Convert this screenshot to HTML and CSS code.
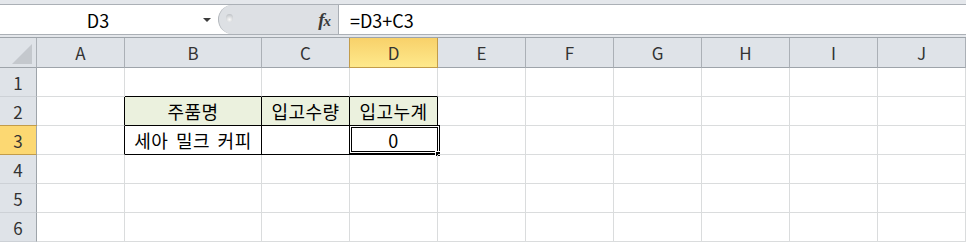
FILE: index.html
```html
<!doctype html>
<html lang="ko">
    <head>
        <meta charset="utf-8">
        <link rel="stylesheet" href="styles.css">
    </head>
    <body>
        <!-- Barra de fórmulas: cuadro de nombre, zona fx y fórmula -->
        <div class="Cinta">
            <div class="BarraFormula">
                <div class="CuadroNombre"><span>D3</span><i class="Flecha"></i></div>
                <div class="ZonaFx"><span class="Pomo"></span><span class="Fx">f<small>x</small></span></div>
                <div class="Formula">=D3+C3</div>
            </div>
        </div>

        <!-- Hoja: 11 columnas (cabecera de filas + A..J) y 7 filas (cabecera + 1..6) -->
        <div class="Hoja">
            <div class="Esquina"><i></i></div>
            <div class="Cab">A</div>
            <div class="Cab">B</div>
            <div class="Cab">C</div>
            <div class="Cab Activa">D</div>
            <div class="Cab">E</div>
            <div class="Cab">F</div>
            <div class="Cab">G</div>
            <div class="Cab">H</div>
            <div class="Cab">I</div>
            <div class="Cab">J</div>

            <div class="Num">1</div>
            <div class="Celda"></div>
            <div class="Celda BordeAbajo"></div>
            <div class="Celda BordeAbajo"></div>
            <div class="Celda BordeAbajo"></div>
            <div class="Celda"></div>
            <div class="Celda"></div>
            <div class="Celda"></div>
            <div class="Celda"></div>
            <div class="Celda"></div>
            <div class="Celda"></div>

            <div class="Num">2</div>
            <div class="Celda BordeDer"></div>
            <div class="Celda Tabla Titulo">주품명</div>
            <div class="Celda Tabla Titulo">입고수량</div>
            <div class="Celda Tabla Titulo">입고누계</div>
            <div class="Celda"></div>
            <div class="Celda"></div>
            <div class="Celda"></div>
            <div class="Celda"></div>
            <div class="Celda"></div>
            <div class="Celda"></div>

            <div class="Num Activa">3</div>
            <div class="Celda BordeDer"></div>
            <div class="Celda Tabla">세아 밀크 커피</div>
            <div class="Celda Tabla"></div>
            <div class="Celda Tabla Seleccion">0<i class="Marco"></i><i class="Tirador"></i></div>
            <div class="Celda"></div>
            <div class="Celda"></div>
            <div class="Celda"></div>
            <div class="Celda"></div>
            <div class="Celda"></div>
            <div class="Celda"></div>

            <div class="Num">4</div>
            <div class="Celda"></div>
            <div class="Celda"></div>
            <div class="Celda"></div>
            <div class="Celda"></div>
            <div class="Celda"></div>
            <div class="Celda"></div>
            <div class="Celda"></div>
            <div class="Celda"></div>
            <div class="Celda"></div>
            <div class="Celda"></div>

            <div class="Num">5</div>
            <div class="Celda"></div>
            <div class="Celda"></div>
            <div class="Celda"></div>
            <div class="Celda"></div>
            <div class="Celda"></div>
            <div class="Celda"></div>
            <div class="Celda"></div>
            <div class="Celda"></div>
            <div class="Celda"></div>
            <div class="Celda"></div>

            <div class="Num">6</div>
            <div class="Celda"></div>
            <div class="Celda"></div>
            <div class="Celda"></div>
            <div class="Celda"></div>
            <div class="Celda"></div>
            <div class="Celda"></div>
            <div class="Celda"></div>
            <div class="Celda"></div>
            <div class="Celda"></div>
            <div class="Celda"></div>
        </div>
    </body>
</html>
```

FILE: styles.css
```css
body                                    { margin:0; background:#FFF; font-family:"Noto Sans CJK KR", "Noto Sans", sans-serif; color:#000; }
*                                       { box-sizing:border-box; }

/* Franja superior con la barra de fórmulas */
.Cinta                                  { background:#E4E7EB; padding:4px 0 2px; }
.BarraFormula {
    display:flex;
    height:31px;
    background:#FFF;
    border-top:1px solid #ABB0B6;
    border-bottom:1px solid #ABB0B6;
    font-size:18px;
}
.CuadroNombre                           { width:218px; display:flex; align-items:center; }
.CuadroNombre > span                    { width:196px; text-align:center; }
/* Flecha del desplegable */
.Flecha {
    margin-left:7px;
    border-left:4px solid transparent;
    border-right:4px solid transparent;
    border-top:4px solid #3C3C3C;
}
/* Zona gris redondeada con el botón fx */
.ZonaFx {
    width:121px;
    display:flex;
    align-items:center;
    background:#DDE0E4;
    border-left:1px solid #B3B7BC;
    border-right:1px solid #A9AEB4;
    border-radius:15px 0 0 15px;
}
.Pomo {
    width:7px;
    height:8px;
    margin:-3px 0 0 7px;
    border-radius:50%;
    background:radial-gradient(circle at 50% 70%, #FAFAFA, #B4B8BD);
}
.Fx                                     { margin-left:auto; margin-right:8px; font:italic bold 19px "Liberation Serif", serif; color:#3A3A3A; letter-spacing:-1px; }
.Fx > small                             { font-size:15px; }
.Formula                                { padding-left:11px; display:flex; align-items:center; }

/* Rejilla de la hoja */
.Hoja {
    display:grid;
    grid-template-columns:37px 88px 137px repeat(8, 88px);
    grid-template-rows:30px repeat(6, 29px);
    border-top:1px solid #9EA4AA;
    font-size:17px;
}
.Hoja > div                             { display:flex; align-items:center; justify-content:center; position:relative; }

/* Cabeceras de columna y de fila */
.Cab                                    { background:#DFE3E8; color:#333; border-right:1px solid #ABB0B6; border-bottom:1px solid #9EA4AA; }
.Num                                    { background:#DFE3E8; color:#333; border-right:1px solid #9EA4AA; border-bottom:1px solid #CDD1D6; }
.Esquina                                { background:#DFE3E8; border-right:1px solid #ABB0B6; border-bottom:1px solid #9EA4AA; }
.Esquina > i {
    position:absolute;
    right:4px;
    bottom:3px;
    width:20px;
    height:20px;
    background:#C4C8CD;
    clip-path:polygon(100% 0, 100% 100%, 0 100%);
}
.Cab.Activa                             { background:linear-gradient(#F8D16A, #FEE98C); border-color:#C29C4A; box-shadow:-1px 0 0 #C29C4A; }
.Num.Activa                             { background:#FCD872; border-bottom-color:#C29C4A; box-shadow:0 -1px 0 #C29C4A; }

/* Celdas */
.Celda                                  { border-right:1px solid #DADCDD; border-bottom:1px solid #DADCDD; font-size:18px; letter-spacing:0.5px; word-spacing:2px; }
.BordeAbajo                             { border-bottom-color:#000; }
.BordeDer                               { border-right-color:#000; }
.Tabla                                  { border-right-color:#000; border-bottom-color:#000; }
.Titulo                                 { background:#EBF1DE; }

/* Celda activa D3: marco doble y tirador de relleno */
.Marco {
    position:absolute;
    left:-1px;
    top:-1px;
    width:91px;
    height:29px;
    border:1px solid #000;
    box-shadow:inset 0 0 0 1px #FFF, inset 0 0 0 2px #000;
}
.Tirador {
    position:absolute;
    left:85px;
    top:25px;
    width:6px;
    height:6px;
    background:#000;
    border:1px solid #FFF;
}
```
